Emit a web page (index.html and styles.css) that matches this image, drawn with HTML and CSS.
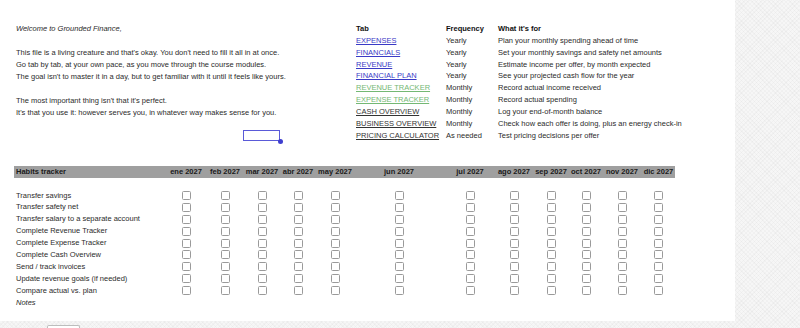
FILE: index.html
```html
<!DOCTYPE html>
<html>
<head>
<meta charset="utf-8">
<link rel="stylesheet" href="styles.css">
</head>
<body>
<div class="page">
  <div class="sheet">
    <div class="top">
      <div class="intro">
        <p class="line welcome">Welcome to Grounded Finance,</p>
        <p class="line">&nbsp;</p>
        <p class="line">This file is a living creature and that's okay. You don't need to fill it all in at once.</p>
        <p class="line">Go tab by tab, at your own pace, as you move through the course modules.</p>
        <p class="line">The goal isn't to master it in a day, but to get familiar with it until it feels like yours.</p>
        <p class="line">&nbsp;</p>
        <p class="line">The most important thing isn't that it's perfect.</p>
        <p class="line">It's that you use it: however serves you, in whatever way makes sense for you.</p>
        <div class="selbox"><span class="handle"></span></div>
      </div>
      <div class="tabs">
        <div class="trow th"><span>Tab</span><span>Frequency</span><span>What it's for</span></div>
        <div class="trow"><span><a class="lk blue">EXPENSES </a></span><span>Yearly</span><span>Plan your monthly spending ahead of time</span></div>
        <div class="trow"><span><a class="lk blue">FINANCIALS</a></span><span>Yearly</span><span>Set your monthly savings and safety net amounts</span></div>
        <div class="trow"><span><a class="lk blue">REVENUE</a></span><span>Yearly</span><span>Estimate income per offer, by month expected</span></div>
        <div class="trow"><span><a class="lk blue">FINANCIAL PLAN</a></span><span>Yearly</span><span>See your projected cash flow for the year</span></div>
        <div class="trow"><span><a class="lk green">REVENUE TRACKER</a></span><span>Monthly</span><span>Record actual income received</span></div>
        <div class="trow"><span><a class="lk green">EXPENSE TRACKER</a></span><span>Monthly</span><span>Record actual spending</span></div>
        <div class="trow"><span><a class="lk dark">CASH OVERVIEW</a></span><span>Monthly</span><span>Log your end-of-month balance</span></div>
        <div class="trow"><span><a class="lk dark">BUSINESS OVERVIEW</a></span><span>Monthly</span><span>Check how each offer is doing, plus an energy check-in</span></div>
        <div class="trow"><span><a class="lk dark">PRICING CALCULATOR</a></span><span>As needed</span><span>Test pricing decisions per offer</span></div>
      </div>
    </div>

    <div class="habits" id="habits">
      <div class="hrow head">
        <span class="lbl">Habits tracker</span>
        <span class="c">ene 2027</span><span class="c">feb 2027</span><span class="c">mar 2027</span><span class="c">abr 2027</span><span class="c">may 2027</span><span class="c">jun 2027</span><span class="c">jul 2027</span><span class="c">ago 2027</span><span class="c">sep 2027</span><span class="c">oct 2027</span><span class="c">nov 2027</span><span class="c">dic 2027</span>
      </div>
      <div class="spacer"></div>
    </div>
  </div>
  <div class="tabbar"><span class="sheettab"></span></div>
</div>
<script>
  var items = ["Transfer savings","Transfer safety net","Transfer salary to a separate account","Complete Revenue Tracker","Complete Expense Tracker","Complete Cash Overview","Send / track invoices","Update revenue goals (if needed)","Compare actual vs. plan"];
  var h = document.getElementById('habits');
  items.forEach(function(t){
    var r = document.createElement('div');
    r.className = 'hrow';
    var l = document.createElement('span'); l.className='lbl'; l.textContent=t; r.appendChild(l);
    for (var i=0;i<12;i++){ var c=document.createElement('span'); c.className='c'; var b=document.createElement('i'); b.className='cb'; c.appendChild(b); r.appendChild(c); }
    h.appendChild(r);
  });
  var n = document.createElement('div'); n.className='hrow';
  var nl = document.createElement('span'); nl.className='lbl notes'; nl.textContent='Notes'; n.appendChild(nl);
  h.appendChild(n);
</script>
</body>
</html>
```

FILE: styles.css
```css
html, body {
  margin: 0;
  padding: 0;
}
body {
  width: 800px;
  height: 328px;
  overflow: hidden;
  background-color: #f6f6f6;
  background-image: repeating-linear-gradient(45deg, rgba(0,0,0,0.025) 0 1px, transparent 1px 3px),
                    repeating-linear-gradient(-45deg, rgba(0,0,0,0.025) 0 1px, transparent 1px 3px);
  font-family: "Liberation Sans", Arial, sans-serif;
  font-size: 7.5px;
  color: #2b2b2b;
}
.sheet {
  width: 735px;
  height: 321px;
  background: #fff;
  box-sizing: border-box;
  padding-top: 23px;
}
.top {
  display: flex;
  height: 143px;
}
.intro {
  width: 340px;
  padding-left: 16px;
  box-sizing: content-box;
}
.line {
  margin: 0;
  height: 12px;
  line-height: 12px;
  white-space: nowrap;
}
.welcome { font-style: italic; }
.selbox {
  position: relative;
  margin: 11px 0 0 227px;
  width: 35px;
  height: 9px;
  border: 1.5px solid #5a5ad8;
}
.handle {
  position: absolute;
  right: -3.5px;
  bottom: -3.5px;
  width: 5px;
  height: 5px;
  border-radius: 50%;
  background: #3f3fcf;
}
.tabs {
  display: flex;
  flex-direction: column;
}
.trow {
  display: grid;
  grid-template-columns: 90px 52px auto;
  height: 11.85px;
  line-height: 11.85px;
  white-space: nowrap;
}
.th { font-weight: bold; color: #111; }
.lk { text-decoration: underline; }
.blue { color: #3a3ac6; }
.green { color: #74b874; }
.dark { color: #333; }

.habits {
  margin-top: 0;
  padding-left: 14px;
}
.hrow {
  display: grid;
  grid-template-columns: 152px 40px 38px 36px 36px 38px 90px 52px 36px 38px 32px 40px 33px;
  width: 661px;
  height: 11.9px;
  line-height: 11.9px;
  white-space: nowrap;
}
.hrow.head {
  height: 12px;
  line-height: 12px;
  background: #9f9f9f;
  font-weight: bold;
  color: #1a1a1a;
}
.spacer { height: 11.5px; }
.lbl { padding-left: 2px; }
.notes { font-style: italic; }
.c {
  display: flex;
  justify-content: center;
  align-items: center;
}
.cb {
  display: block;
  width: 7px;
  height: 7px;
  border: 1.3px solid #9a9a9a;
  border-radius: 1.5px;
  background: #fff;
}
.tabbar {
  padding: 4px 0 0 47px;
}
.sheettab {
  display: block;
  width: 31px;
  height: 10px;
  background: #fff;
  border: 1px solid #bdbdbd;
  border-bottom: none;
  border-radius: 2px 2px 0 0;
}
```
